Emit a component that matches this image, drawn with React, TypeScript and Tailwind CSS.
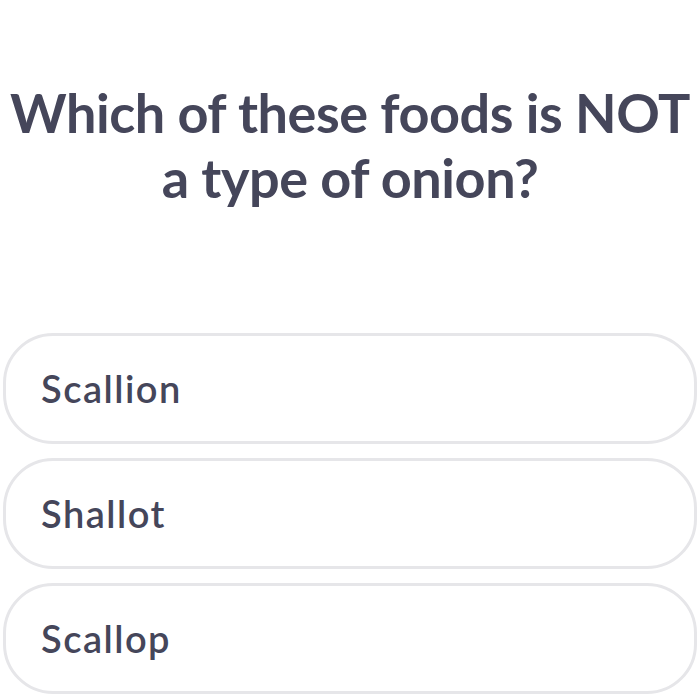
import React from 'react';

const options = ['Scallion', 'Shallot', 'Scallop'];

export default function App() {
  return (
    <div className="w-[700px] h-[700px] bg-white overflow-hidden font-['Lato',sans-serif]">
      {/* Question */}
      <div className="pt-[80px] h-[333px]">
        <h1 className="text-center text-[54px] leading-[65px] font-bold text-[#45465a] tracking-[-0.45px]">
          Which of these foods is NOT
          <br />
          a type of onion?
        </h1>
      </div>

      {/* Answers */}
      <div className="flex flex-col gap-[14px] px-[3px]">
        {options.map((o) => (
          <div
            key={o}
            className="h-[111px] rounded-[50px] border-[3px] border-[#e6e6e9] flex items-center pl-[35px]"
          >
            <span className="text-[38px] tracking-[1.5px] font-semibold text-[#45465a]">{o}</span>
          </div>
        ))}
      </div>
    </div>
  );
}
